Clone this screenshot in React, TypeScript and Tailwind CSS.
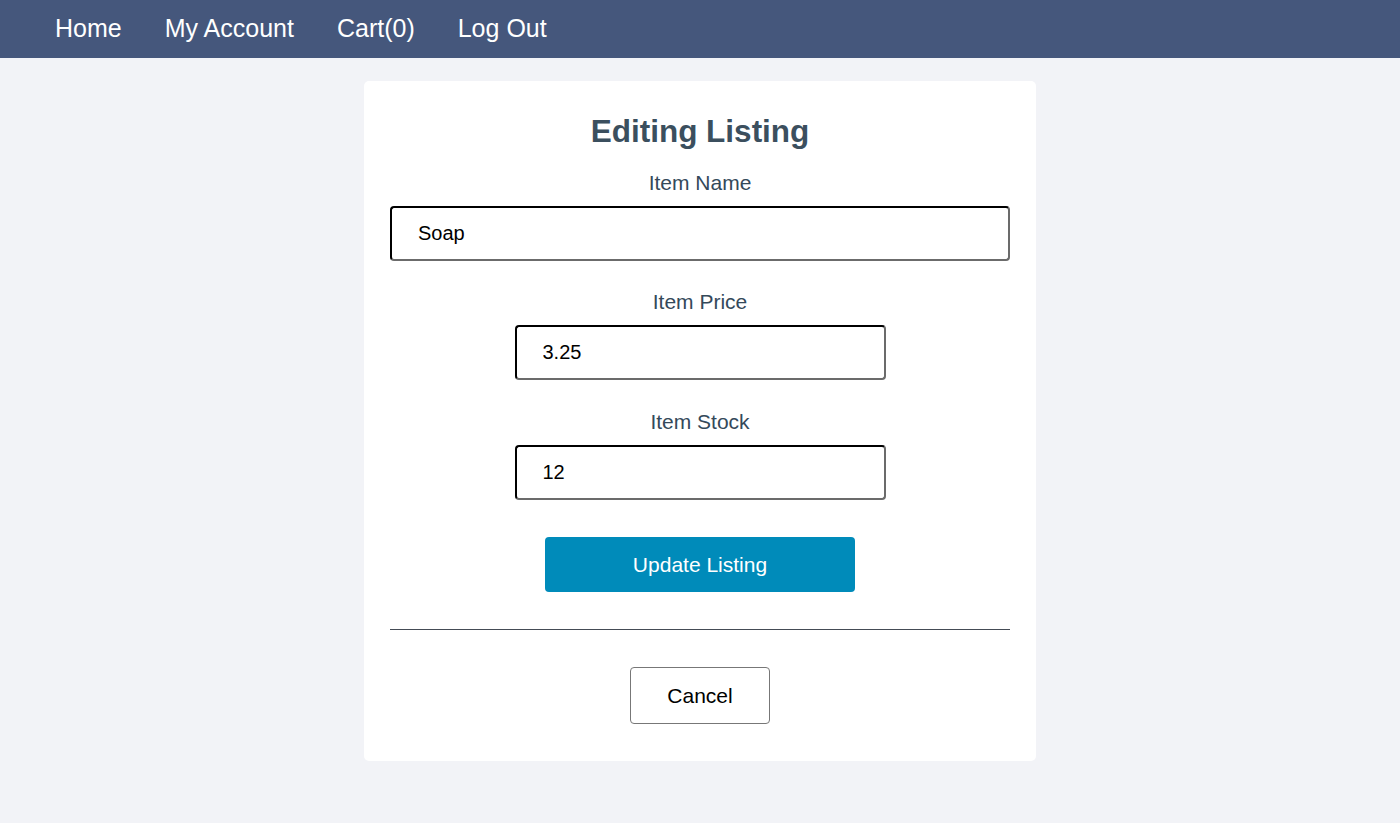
import React from "react";

const font = { fontFamily: '"Liberation Sans", Arial, Helvetica, sans-serif' };

function Field({ label, value, width }: { label: string; value: string; width: string }) {
  return (
    <div className="flex flex-col items-center">
      <label className="text-[21px] leading-[24px] text-[#34495a]">{label}</label>
      <input
        readOnly
        value={value}
        className={`${width} mt-[11px] h-[55px] rounded-[4px] border-2 border-t-black border-l-black border-r-[#6b6b6b] border-b-[#6b6b6b] bg-white pl-[26px] text-[20px] text-black outline-none`}
        style={font}
      />
    </div>
  );
}

export default function App() {
  return (
    <div className="min-h-[823px] bg-[#f2f3f7]" style={font}>
      <nav className="flex h-[58px] items-center bg-[#45577c] pl-[55px] gap-[43px] text-[25px] text-white">
        <span>Home</span>
        <span>My Account</span>
        <span>Cart(0)</span>
        <span>Log Out</span>
      </nav>
      <div className="flex justify-center pt-[23px]">
        <div className="w-[672px] rounded-[5px] bg-white px-[26px] pt-[31px] pb-[37px] flex flex-col items-center">
          <h1 className="text-center text-[31.5px] leading-[38px] font-bold text-[#3b4f5e]">
            Editing Listing
          </h1>
          <div className="mt-[21px] w-full flex flex-col items-center">
            <Field label="Item Name" value="Soap" width="w-[620px]" />
            <div className="h-[29px]" />
            <Field label="Item Price" value="3.25" width="w-[371px]" />
            <div className="h-[30px]" />
            <Field label="Item Stock" value="12" width="w-[371px]" />
            <button className="mt-[37px] h-[55px] w-[310px] rounded-[4px] bg-[#008bba] text-[21px] text-white">
              Update Listing
            </button>
            <hr className="mt-[37px] w-full border-0 border-t border-[#444b55]" />
            <button className="mt-[37px] h-[57px] w-[140px] rounded-[4px] border border-[#777] bg-white text-[21px] text-black">
              Cancel
            </button>
          </div>
        </div>
      </div>
    </div>
  );
}
